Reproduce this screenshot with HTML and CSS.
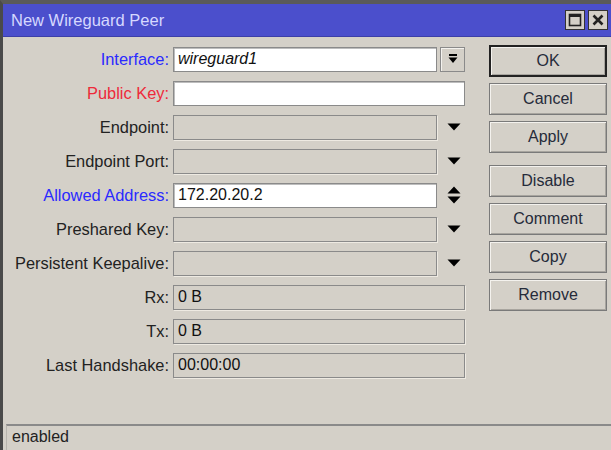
FILE: index.html
```html
<!DOCTYPE html>
<html lang="en">
<head>
  <meta charset="UTF-8">
  <title>New Wireguard Peer</title>
  <link rel="stylesheet" href="styles.css">
</head>
<body>
  <div class="window">
    <!-- title bar -->
    <div class="titlebar">
      <span class="title">New Wireguard Peer</span>
      <div class="title-btns">
        <span class="tbtn">
          <svg width="14" height="14" viewBox="0 0 14 14"><rect x="1.5" y="1.5" width="11" height="11" fill="none" stroke="#222" stroke-width="1.6"/><rect x="1.5" y="1.5" width="11" height="2.5" fill="#222"/></svg>
        </span>
        <span class="tbtn">
          <svg width="14" height="14" viewBox="0 0 14 14"><path d="M2.5 2.5 L11.5 11.5 M11.5 2.5 L2.5 11.5" stroke="#222" stroke-width="2.6"/></svg>
        </span>
      </div>
    </div>

    <div class="content">
      <div class="form">
        <div class="row">
          <label class="lbl blue">Interface:</label>
          <div class="field">
            <div class="input italic">wireguard1</div>
            <span class="dd-btn">
              <svg width="12" height="12" viewBox="0 0 12 12"><rect x="2" y="1" width="8" height="2" fill="#000"/><path d="M1.5 4.5 H10.5 L6 10 Z" fill="#000"/></svg>
            </span>
          </div>
        </div>
        <div class="row">
          <label class="lbl red">Public Key:</label>
          <div class="field"><div class="input wide"></div></div>
        </div>
        <div class="row">
          <label class="lbl">Endpoint:</label>
          <div class="field">
            <div class="input off"></div>
            <span class="arrow"><svg width="14" height="8" viewBox="0 0 14 8"><path d="M0.5 0.5 H13.5 L7 7.5 Z" fill="#000"/></svg></span>
          </div>
        </div>
        <div class="row">
          <label class="lbl">Endpoint Port:</label>
          <div class="field">
            <div class="input off"></div>
            <span class="arrow"><svg width="14" height="8" viewBox="0 0 14 8"><path d="M0.5 0.5 H13.5 L7 7.5 Z" fill="#000"/></svg></span>
          </div>
        </div>
        <div class="row">
          <label class="lbl blue">Allowed Address:</label>
          <div class="field">
            <div class="input">172.20.20.2</div>
            <span class="arrow"><svg width="14" height="18" viewBox="0 0 14 18"><path d="M7 0.5 L13.5 7.5 H0.5 Z M0.5 10.5 H13.5 L7 17.5 Z" fill="#000"/></svg></span>
          </div>
        </div>
        <div class="row">
          <label class="lbl">Preshared Key:</label>
          <div class="field">
            <div class="input off"></div>
            <span class="arrow"><svg width="14" height="8" viewBox="0 0 14 8"><path d="M0.5 0.5 H13.5 L7 7.5 Z" fill="#000"/></svg></span>
          </div>
        </div>
        <div class="row">
          <label class="lbl">Persistent Keepalive:</label>
          <div class="field">
            <div class="input off"></div>
            <span class="arrow"><svg width="14" height="8" viewBox="0 0 14 8"><path d="M0.5 0.5 H13.5 L7 7.5 Z" fill="#000"/></svg></span>
          </div>
        </div>
        <div class="row">
          <label class="lbl">Rx:</label>
          <div class="field"><div class="input off wide">0 B</div></div>
        </div>
        <div class="row">
          <label class="lbl">Tx:</label>
          <div class="field"><div class="input off wide">0 B</div></div>
        </div>
        <div class="row">
          <label class="lbl">Last Handshake:</label>
          <div class="field"><div class="input off wide">00:00:00</div></div>
        </div>
      </div>

      <div class="buttons">
        <button class="btn default">OK</button>
        <button class="btn">Cancel</button>
        <button class="btn">Apply</button>
        <button class="btn sep">Disable</button>
        <button class="btn">Comment</button>
        <button class="btn">Copy</button>
        <button class="btn">Remove</button>
      </div>
    </div>

    <div class="status">enabled</div>
  </div>
</body>
</html>
```

FILE: styles.css
```css
body {
  margin: 0;
  background: #d4d0c8;
  font-family: "Liberation Sans", Arial, sans-serif;
  font-size: 16px;
  color: #222;
}
.window {
  width: 611px;
  height: 450px;
  box-sizing: border-box;
  border-top: 4px solid #5a5a5a;
  border-left: 3px solid #4a4a4a;
  display: flex;
  flex-direction: column;
  background: #d4d0c8;
}

/* title bar */
.titlebar {
  height: 32px;
  background: #4b4fcc;
  display: flex;
  align-items: center;
  justify-content: space-between;
  padding-left: 8px;
  border-bottom: 1px solid #3c3fa8;
}
.title {
  color: #d6d8ff;
  font-size: 16.5px;
}
.title-btns {
  display: flex;
  gap: 3px;
  padding-right: 3px;
}
.tbtn {
  width: 20px;
  height: 20px;
  box-sizing: border-box;
  background: #d4d0c8;
  border: 1px solid #333;
  display: flex;
  align-items: center;
  justify-content: center;
}

/* main area */
.content {
  flex: 1;
  display: flex;
  padding-top: 5px;
}
.form {
  width: 486px;
  display: flex;
  flex-direction: column;
}
.row {
  height: 34px;
  display: flex;
  align-items: center;
}
.lbl {
  width: 166px;
  text-align: right;
  padding-right: 4px;
  white-space: nowrap;
  font-size: 16.4px;
}
.lbl.blue { color: #2a2aff; }
.lbl.red { color: #ee2a3a; }
.field {
  display: flex;
  align-items: center;
}
.input {
  width: 264px;
  height: 25px;
  box-sizing: border-box;
  background: #fff;
  border: 1px solid #8a8a8a;
  box-shadow: inset 1px 1px 0 #bdbdbd;
  padding: 2px 4px 0;
  font-size: 16px;
  color: #111;
}
.input.wide { width: 292px; }
.input.off {
  background: #d4d0c8;
  border-color: #8a8a8a;
  box-shadow: 1px 1px 0 #eeeae2;
}
.input.italic { font-style: italic; }
.dd-btn {
  width: 25px;
  height: 25px;
  box-sizing: border-box;
  margin-left: 3px;
  border: 1px solid #8a8a8a;
  box-shadow: inset 1px 1px 0 #f4f2ee;
  display: flex;
  align-items: center;
  justify-content: center;
}
.arrow {
  width: 28px;
  display: flex;
  justify-content: center;
  margin-left: 3px;
}

/* right hand buttons */
.buttons {
  width: 118px;
  display: flex;
  flex-direction: column;
  gap: 6px;
  padding-top: 3px;
}
.btn {
  height: 32px;
  box-sizing: border-box;
  background: #d4d0c8;
  border: 1px solid #7a7a7a;
  box-shadow: inset 1px 1px 0 #f4f2ee, inset -1px -1px 0 #a8a59f;
  font-family: "Liberation Sans", Arial, sans-serif;
  font-size: 16px;
  color: #262b3a;
  padding: 0;
}
.btn.default {
  border: 2px solid #222;
}
.btn.sep { margin-top: 6px; }

/* status bar */
.status {
  height: 26px;
  box-sizing: border-box;
  margin-left: 3px;
  border-top: 2px solid #8a8a8a;
  border-left: 1px solid #b8b5ae;
  padding: 2px 0 0 5px;
  font-size: 16px;
  color: #222;
}
```
